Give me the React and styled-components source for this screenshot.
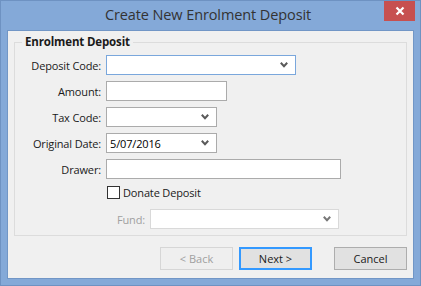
import React from 'react';
import styled, { createGlobalStyle } from 'styled-components';

const GlobalStyle = createGlobalStyle`
  html, body {
    margin: 0;
    padding: 0;
    background: #ffffff;
  }
  * {
    box-sizing: border-box;
  }
`;

function Chevron({ disabled }) {
  return (
    <ChevronIcon width="8" height="6" viewBox="0 0 8 6" $disabled={disabled}>
      <path d="M0.8 0.8 L4 4.2 L7.2 0.8" fill="none" strokeWidth="2" />
    </ChevronIcon>
  );
}

function Field({ label, width, value, select, focused, disabled, indent }) {
  return (
    <Row $indent={indent}>
      <Label $disabled={disabled}>{label}</Label>
      <Input $width={width} $focused={focused} $disabled={disabled}>
        <InputText>{value}</InputText>
        {select && <Chevron disabled={disabled} />}
      </Input>
    </Row>
  );
}

export default function App() {
  return (
    <>
      <GlobalStyle />
      <Window>
        <TitleBar>
          <span />
          <Title>Create New Enrolment Deposit</Title>
          <CloseButton>
            <svg width="10" height="10" viewBox="0 0 10 10">
              <path d="M1.5 1.5 L8.5 8.5 M8.5 1.5 L1.5 8.5" stroke="#fff" strokeWidth="2.2" />
            </svg>
          </CloseButton>
        </TitleBar>
        <Client>
          <GroupBox>
            <Legend>Enrolment Deposit</Legend>
            <Fields>
              <Field label="Deposit Code:" width={190} select focused />
              <Field label="Amount:" width={121} />
              <Field label="Tax Code:" width={111} select />
              <Field label="Original Date:" width={111} select value="5/07/2016" />
              <Field label="Drawer:" width={235} />
              <CheckRow>
                <Checkbox />
                <CheckLabel>Donate Deposit</CheckLabel>
              </CheckRow>
              <FundWrap>
                <Field label="Fund:" width={189} select disabled indent={44} />
              </FundWrap>
            </Fields>
          </GroupBox>
          <Footer>
            <Button disabled>&lt; Back</Button>
            <Button $default>Next &gt;</Button>
            <Button $spaced>Cancel</Button>
          </Footer>
        </Client>
      </Window>
    </>
  );
}

const Window = styled.div`
  width: 421px;
  height: 286px;
  background: #84a9d8;
  border: 1px solid #6e92c2;
  display: flex;
  flex-direction: column;
  font-family: 'Segoe UI', 'Open Sans', sans-serif;
  font-size: 11px;
  letter-spacing: -0.15px;
  color: #1a1a1a;
`;

const TitleBar = styled.div`
  height: 29px;
  display: grid;
  grid-template-columns: 1fr auto 1fr;
  align-items: start;
  padding-right: 5px;
`;

const Title = styled.div`
  font-size: 14.5px;
  line-height: 28px;
  color: #333333;
  letter-spacing: -0.1px;
`;

const CloseButton = styled.div`
  justify-self: end;
  width: 31px;
  height: 20px;
  background: #c75050;
  display: flex;
  align-items: center;
  justify-content: center;
`;

const Client = styled.div`
  flex: 1;
  margin: 0 6px 6px;
  background: #f0f0f0;
  border: 1px solid #7196c6;
  display: flex;
  flex-direction: column;
  padding: 3px 6px 0;
`;

const GroupBox = styled.fieldset`
  margin: 0;
  padding: 5px 0 6px;
  border: 1px solid #dcdcdc;
  min-width: 0;
`;

const Legend = styled.legend`
  margin-left: 7px;
  padding: 0 3px;
  font-weight: bold;
  font-size: 11.5px;
  line-height: 16px;
  color: #1a1a1a;
`;

const Fields = styled.div`
  display: flex;
  flex-direction: column;
  gap: 6px;
`;

const Row = styled.div`
  display: flex;
  align-items: center;
  gap: 5px;
  height: 20px;
  padding-left: ${p => p.$indent || 0}px;
`;

const Label = styled.div`
  width: 86px;
  text-align: right;
  white-space: nowrap;
  color: ${p => (p.$disabled ? '#a0a0a0' : '#1a1a1a')};
`;

const Input = styled.div`
  width: ${p => p.$width}px;
  height: 20px;
  background: #ffffff;
  border: 1px solid
    ${p => (p.$focused ? '#7aa7dc' : p.$disabled ? '#d9d9d9' : '#ababab')};
  display: flex;
  align-items: center;
  padding: 0 7px 0 3px;
`;

const InputText = styled.span`
  flex: 1;
  color: #000000;
`;

const ChevronIcon = styled.svg`
  display: block;
  stroke: ${p => (p.$disabled ? '#777777' : '#5a5a5a')};
`;

const CheckRow = styled.div`
  display: flex;
  align-items: center;
  height: 13px;
  margin-top: 1px;
  padding-left: 92px;
  gap: 3px;
`;

const Checkbox = styled.div`
  width: 13px;
  height: 13px;
  border: 1px solid #333333;
  background: #ffffff;
`;

const CheckLabel = styled.span`
  color: #1a1a1a;
`;

const FundWrap = styled.div`
  margin-top: 4px;
`;

const Footer = styled.div`
  display: flex;
  justify-content: flex-end;
  gap: 6px;
  margin-top: 11px;
`;

const Button = styled.button`
  width: 73px;
  height: 23px;
  font-family: inherit;
  font-size: 11px;
  padding: 0;
  margin-left: ${p => (p.$spaced ? '16px' : '0')};
  background: ${p => (p.disabled ? '#efefef' : '#e1e1e1')};
  border: 1px solid
    ${p => (p.disabled ? '#d6d6d6' : p.$default ? '#3399ff' : '#adadad')};
  box-shadow: ${p => (p.$default ? 'inset 0 0 0 1px #3399ff' : 'none')};
  color: ${p => (p.disabled ? '#a0a0a0' : '#1a1a1a')};
`;
